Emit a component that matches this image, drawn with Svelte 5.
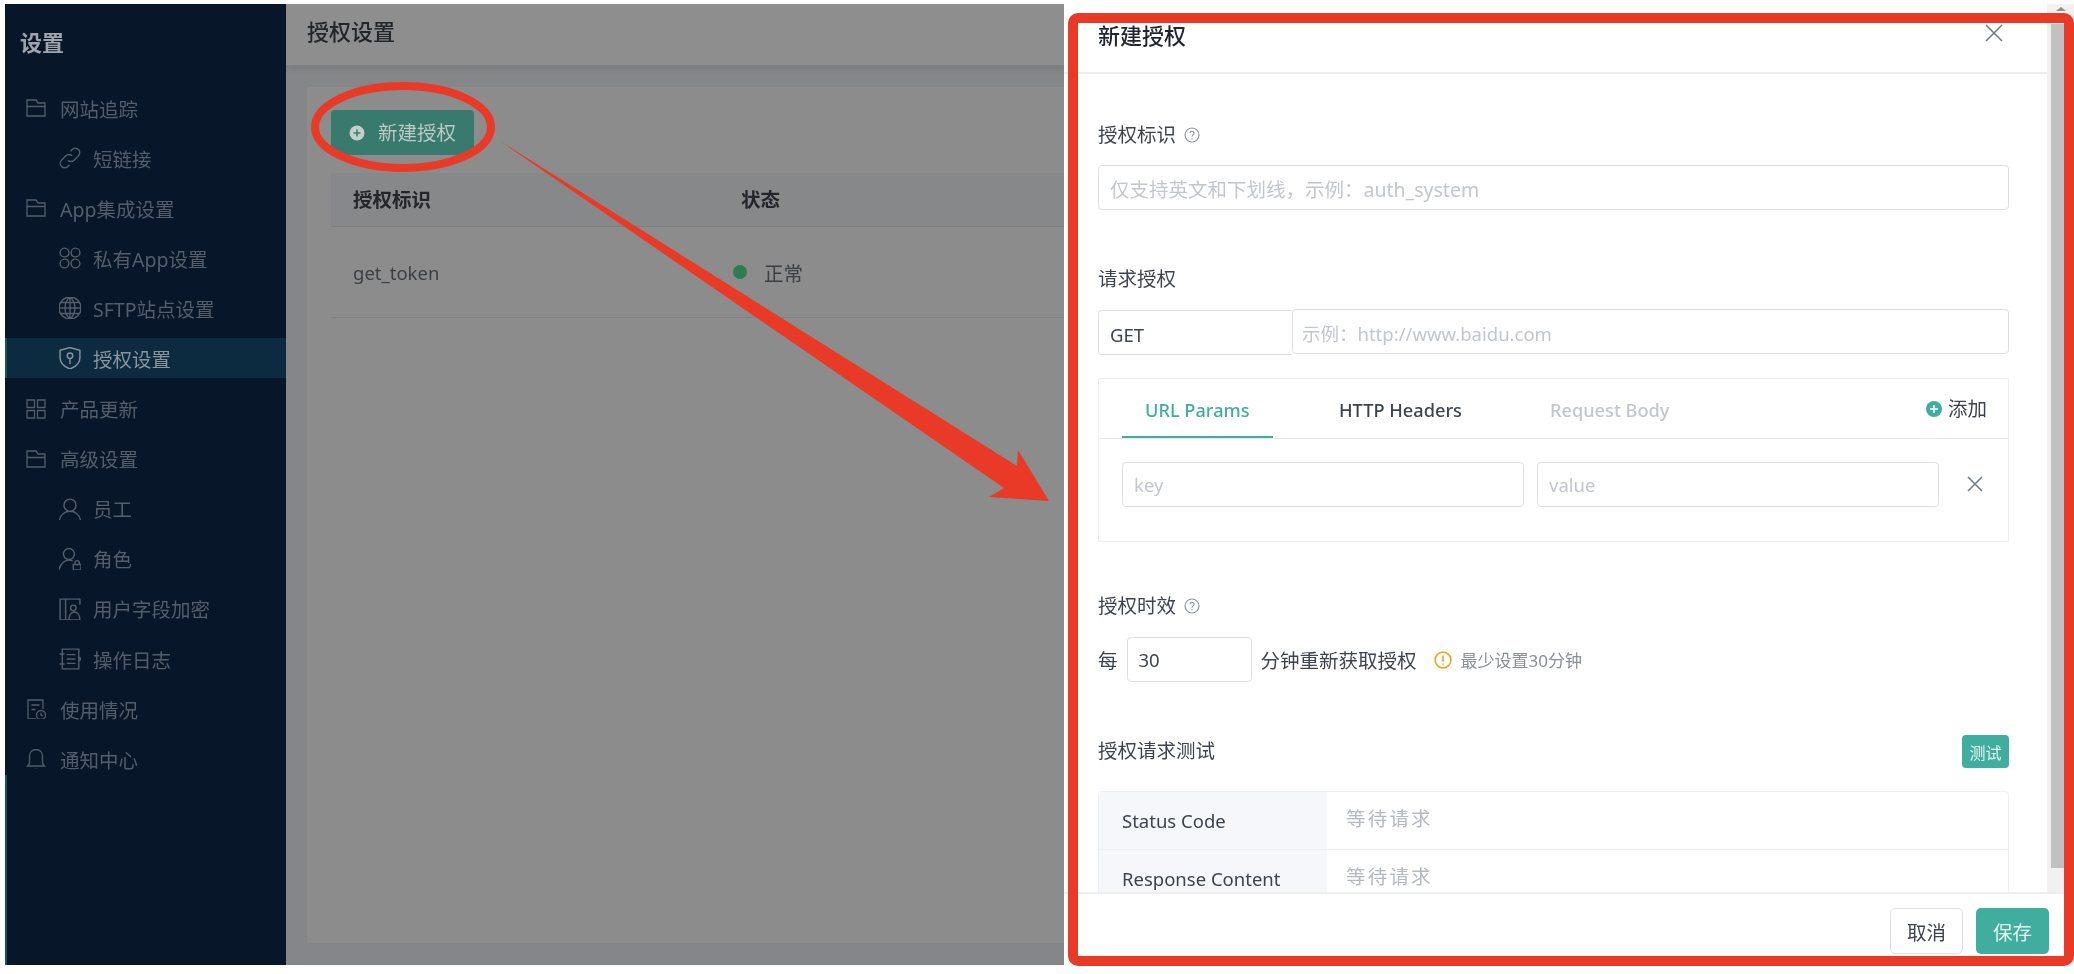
<script>
  const P = {
    folder: 'M3 4h9l2 3h7v13H3z M3 10.5h18',
    link: 'M10 14a4 4 0 0 0 5.7 0l4-4a4 4 0 0 0-5.7-5.7l-1.5 1.5 M14 10a4 4 0 0 0-5.7 0l-4 4a4 4 0 0 0 5.7 5.7l1.5-1.5',
    apps: 'M7 3a4 4 0 0 1 4 4c0 2.500-1.500 4-4 4a4 4 0 0 1 0-8z M17 3a4 4 0 0 1 0 8c-2.500 0-4-1.500-4-4a4 4 0 0 1 4-4z M7 13c2.500 0 4 1.500 4 4a4 4 0 1 1-4-4z M17 13a4 4 0 1 1-4 4c0-2.500 1.500-4 4-4z',
    globe: 'M12 2a10 10 0 1 0 0 20a10 10 0 1 0 0-20z M2 12h20 M3.5 7h17 M3.5 17h17 M12 2c-6 5-6 15 0 20 M12 2c6 5 6 15 0 20 M12 2v20',
    shield: 'M12 2.500l9 2.500v7c0 5-4 8-9 10c-5-2-9-5-9-10V5z M12 7.500a2.500 2.500 0 1 0 0 5a2.500 2.500 0 1 0 0-5z M12 12.500v5',
    grid: 'M3 3h7.5v7.5H3z M13.5 3H21v7.5h-7.5z M3 13.5h7.5V21H3z M13.5 13.5H21V21h-7.5z',
    user: 'M12 3a5.5 5.5 0 1 0 0 11a5.5 5.5 0 1 0 0-11z M2.5 22c1-5 5-8 9.5-8s8.5 3 9.5 8',
    userlock: 'M11 2.5a5 5 0 1 0 0 10a5 5 0 1 0 0-10z M2 22c.7-5 4.500-9 9-9c1.500 0 2.500.3 3.500 1 M15 17h7v5h-7z M16.500 17v-1.500a2 2 0 0 1 4 0V17',
    docuser: 'M21 8V3H3v19h8 M8 3v19 M15 8.500a2.500 2.500 0 1 0 0 5a2.500 2.500 0 1 0 0-5z M11 22c0-4 2-7 4-7h2c2 0 4 3 4 7z',
    notebook: 'M5 3h15v18H5z M2.500 7.500H7 M2.500 16.500H7 M9 8h8 M9 12h8 M9 16h8 M20 10.500a1.500 1.500 0 0 1 0 3',
    docclock: 'M19 12V3H4v19h8 M7.500 8h8 M7.500 12.500h4 M17 13.500a4.500 4.500 0 1 0 0 9a4.500 4.500 0 1 0 0-9z M17 15.800V18l1.800 1',
    bell: 'M12 2.500c-4 0-6.500 3-6.500 7v7L3.500 19h17l-2-2.500v-7c0-4-2.500-7-6.500-7z M10 22.500h4'
  };
  const menu = [
    { t: '网站追踪', i: 'folder' },
    { t: '短链接', i: 'link', sub: true },
    { t: 'App集成设置', i: 'folder' },
    { t: '私有App设置', i: 'apps', sub: true },
    { t: 'SFTP站点设置', i: 'globe', sub: true },
    { t: '授权设置', i: 'shield', sub: true, active: true },
    { t: '产品更新', i: 'grid' },
    { t: '高级设置', i: 'folder' },
    { t: '员工', i: 'user', sub: true },
    { t: '角色', i: 'userlock', sub: true },
    { t: '用户字段加密', i: 'docuser', sub: true },
    { t: '操作日志', i: 'notebook', sub: true },
    { t: '使用情况', i: 'docclock' },
    { t: '通知中心', i: 'bell' }
  ];
</script>

<div class="page">
  <aside class="side">
    <div class="side-title">设置</div>
    <nav class="menu">
      {#each menu as m}
        <div class="item" class:sub={m.sub} class:active={m.active}>
          <svg class="mi" viewBox="2 2 20 20"><path d={P[m.i]} /></svg>
          <span>{m.t}</span>
        </div>
      {/each}
    </nav>
    <div class="side-edge"></div>
  </aside>

  <main class="main">
    <header class="main-head">授权设置</header>
    <div class="content">
      <section class="card">
        <button class="new-btn">
          <svg viewBox="0 0 16 16" class="plus"><circle cx="8" cy="8" r="7.500" fill="#c4cfcc" /><path d="M8 4.500v7M4.500 8h7" stroke="#3a7d70" stroke-width="1.500" /></svg>
          <span class="new-text">新建授权</span>
        </button>
        <div class="thead">
          <div class="c1">授权标识</div>
          <div>状态</div>
        </div>
        <div class="trow">
          <div class="c1 tok">get_token</div>
          <div class="status"><i class="dot"></i>正常</div>
        </div>
      </section>
    </div>
  </main>

  <section class="modal">
    <div class="modal-top">
      <div class="modal-col">
        <div class="modal-head">
          <span>新建授权</span>
          <svg class="x" viewBox="0 0 20 20"><path d="M2 2l16 16M18 2L2 18" /></svg>
        </div>
        <div class="modal-body">
          <div class="label first">授权标识
            <svg class="q" viewBox="0 0 16 16"><circle cx="8" cy="8" r="7" /><path d="M6 6.300a2 2 0 1 1 3 1.700c-.7.400-1 .8-1 1.700M8 11.300v1" /></svg>
          </div>
          <input class="inp full low" placeholder="仅支持英文和下划线，示例：auth_system" />

          <div class="label second">请求授权</div>
          <div class="req">
            <input class="inp get low" value="GET" />
            <input class="inp url low" placeholder="示例：http://www.baidu.com" />
          </div>

          <div class="tabs">
            <div class="tabbar">
              <span class="tab on">URL Params</span>
              <span class="tab hh">HTTP Headers</span>
              <span class="tab off">Request Body</span>
              <span class="add">
                <svg viewBox="0 0 16 16"><circle cx="8" cy="8" r="8" fill="#3fae9e" /><path d="M8 4v8M4 8h8" stroke="#fff" stroke-width="1.500" /></svg>
                添加
              </span>
            </div>
            <div class="kv">
              <input class="inp k" placeholder="key" />
              <input class="inp k" placeholder="value" />
              <svg class="x2" viewBox="0 0 20 20"><path d="M3 3l14 14M17 3L3 17" /></svg>
            </div>
          </div>

          <div class="label third">授权时效
            <svg class="q" viewBox="0 0 16 16"><circle cx="8" cy="8" r="7" /><path d="M6 6.300a2 2 0 1 1 3 1.700c-.7.400-1 .8-1 1.700M8 11.300v1" /></svg>
          </div>
          <div class="every">
            <span>每</span>
            <input class="inp num" value="30" />
            <span class="after">分钟重新获取授权</span>
            <svg class="warn" viewBox="0 0 16 16"><circle cx="8" cy="8" r="7" /><path d="M8 4v5.500M8 11v1.200" /></svg>
            <span class="tip">最少设置30分钟</span>
          </div>

          <div class="test-row">
            <span class="test-label">授权请求测试</span>
            <button class="test-btn">测试</button>
          </div>

          <div class="result">
            <div class="r-row"><div class="r-k">Status Code</div><div class="r-v">等待请求</div></div>
            <div class="r-row"><div class="r-k">Response Content</div><div class="r-v">等待请求</div></div>
          </div>
        </div>
      </div>
      <div class="sb"><div class="thumb"></div></div>
    </div>
    <footer class="modal-foot">
      <button class="btn cancel">取消</button>
      <button class="btn save">保存</button>
    </footer>
  </section>

  <div class="redframe"></div>
  <svg class="annot" viewBox="0 0 2074 974">
    <path d="M2056 11l5-4 5 4z" fill="#8f8f8f" />
    <ellipse cx="403" cy="127" rx="88" ry="41" fill="none" stroke="#e83a27" stroke-width="8" />
    <polygon points="500,141 1017,466 1018,450 1049,501 989,497 1004,488" fill="#e83a27" />
  </svg>
</div>

<style>
  :global(body) { margin: 0; background: #fff; }
  .page {
    position: relative; width: 2074px; height: 974px; box-sizing: border-box;
    padding: 4px 0 9px 5px; display: flex; overflow: hidden; background: #fff;
    font-family: "Noto Sans", "Noto Sans CJK SC", sans-serif; font-size: 19.500px;
    filter: blur(0.6px);
  }
  .side { position: relative; width: 281px; flex: none; background: #071628; color: #545e6a; }
  .side-title { height: 85px; box-sizing: border-box; padding: 23px 0 0 15px; font-size: 22px; font-weight: 700; line-height: 30px; color: #a0a5ab; }
  .menu { display: flex; flex-direction: column; gap: 10.100px; }
  .item { height: 40px; margin-top: -1px; margin-bottom: 1px; display: flex; align-items: center; padding-left: 21px; gap: 14px; }
  .item.sub { padding-left: 54px; gap: 12px; }
  .item.active { background: #0c2a40; color: #8a949c; box-shadow: inset 2px 0 #155552; }
  .mi { width: 20px; height: 20px; flex: none; fill: none; stroke: currentColor; stroke-width: 1.300; }
  .item.sub .mi { width: 22px; height: 22px; }
  .side-edge { position: absolute; left: 0; bottom: 0; width: 2px; height: 190px; background: #155552; }

  .main { flex: 1; min-width: 0; display: flex; flex-direction: column; background: #858687; overflow: hidden; }
  .main-head { height: 61px; flex: none; box-sizing: border-box; padding: 10px 0 0 21px; line-height: 34px; font-size: 22px; font-weight: 500; color: #22262b; background: #8e8e8e; box-shadow: 0 2px 8px rgba(0,0,0,.12); }
  .content { flex: 1; padding: 22px 0 22px 21px; display: flex; }
  .card { flex: 1; background: #8c8c8c; padding: 23px 0 0 24px; }
  .new-btn { display: flex; align-items: center; gap: 13px; width: 143px; height: 45px; box-sizing: border-box; padding: 0 0 0 18px; border: 0; border-radius: 4px; background: #387a6d; color: #bcc9c5; font: inherit; }
  .new-text { margin-top: -3px; }
  .plus { width: 16px; height: 16px; }
  .thead, .trow { display: flex; color: #22262b; }
  .thead { margin-top: 18px; height: 54px; align-items: center; background: #87888a; border-bottom: 1px solid #7c7e81; font-weight: 700; padding-bottom: 2px; box-sizing: border-box; }
  .trow { height: 90px; align-items: center; color: #3b3f44; border-bottom: 1px solid #828282; }
  .c1 { width: 410px; flex: none; padding-left: 22px; box-sizing: border-box; }
  .tok { font-size: 18.500px; }
  .status { display: flex; align-items: center; gap: 17px; margin-left: -8px; }
  .dot { width: 14px; height: 14px; border-radius: 50%; background: #2f7d4f; }

  .modal { width: 1010px; flex: none; margin-bottom: -9px; display: flex; flex-direction: column; background: #fff; color: #3d4450; }
  .modal-top { flex: 1; min-height: 0; display: flex; }
  .modal-col { flex: 1; min-width: 0; display: flex; flex-direction: column; }
  .modal-head { height: 70px; flex: none; box-sizing: border-box; border-bottom: 2px solid #eceef0; padding: 18px 0 0 34px; display: flex; justify-content: space-between; font-size: 22px; font-weight: 500; color: #1e2530; line-height: 26px; }
  .x { width: 20px; height: 20px; margin: 1px 43px 0 0; fill: none; stroke: #6f7885; stroke-width: 1.500; }
  .modal-body { flex: 1; min-height: 0; overflow: hidden; padding: 0 38px 0 34px; }
  .label { display: flex; align-items: center; gap: 8px; height: 26px; line-height: 26px; color: #3d4450; }
  .first { margin-top: 48px; }
  .second { margin-top: 56px; }
  .third { margin-top: 51px; }
  .q { width: 16px; height: 16px; fill: none; stroke: #8f97a3; stroke-width: 1.200; }
  .inp { box-sizing: border-box; height: 45px; border: 1.500px solid #dde1e7; border-radius: 4px; padding: 0 11px; font: inherit; font-size: 18.500px; color: #3d4450; background: #fff; outline: 0; min-width: 0; }
  .inp::placeholder { color: #c2c6cd; opacity: 1; }
  .low { padding-top: 4px; }
  .full { display: block; width: 100%; margin-top: 17px; font-size: 19.500px; }
  .req { display: flex; margin-top: 18px; }
  .get { width: 194px; border-right: 0; border-radius: 4px 0 0 4px; flex: none; }
  .url { flex: 1; padding-left: 9px; margin-top: -1px; }
  .tabs { margin-top: 23px; height: 164px; box-sizing: border-box; border: 1.500px solid #eceef1; border-radius: 2px; }
  .tabbar { position: relative; height: 60px; box-sizing: border-box; border-bottom: 1.500px solid #e8eaed; display: flex; align-items: center; font-weight: 500; font-size: 18.200px; }
  .tab { position: absolute; top: 18px; line-height: 26px; }
  .on { left: 23px; padding: 0 23px; top: 18px; height: 41px; box-sizing: border-box; border-bottom: 2.500px solid #3fae9e; color: #3fae9e; }
  .hh { left: 240px; color: #3d4450; }
  .off { left: 451px; color: #c2c6cd; }
  .add { position: absolute; right: 21px; top: 17px; display: flex; align-items: center; gap: 6px; font-weight: 400; font-size: 19.500px; line-height: 26px; }
  .add svg { width: 16px; height: 16px; }
  .kv { display: flex; align-items: center; gap: 13px; padding: 23px 0 0 23px; }
  .k { width: 402px; flex: none; }
  .x2 { width: 20px; height: 20px; margin: -2px 0 0 13px; fill: none; stroke: #6f7885; stroke-width: 1.500; }
  .every { display: flex; align-items: center; margin-top: 18px; }
  .num { width: 125px; margin-left: 9px; }
  .after { margin-left: 9px; }
  .warn { width: 18px; height: 18px; margin-left: 17px; fill: none; stroke: #eea72b; stroke-width: 1.500; }
  .tip { margin-left: 9px; font-size: 17px; color: #8a8f98; }
  .test-row { display: flex; justify-content: space-between; align-items: center; margin-top: 53px; }
  .test-label { margin-top: -5px; }
  .test-btn { width: 47px; height: 33px; padding: 0; border: 0; border-radius: 4px; background: #3fae9e; color: #e6f5f2; font: inherit; font-size: 16px; }
  .result { margin-top: 23px; border: 1.500px solid #eceff3; border-radius: 4px; }
  .r-row { display: flex; height: 58px; border-bottom: 1.500px solid #eceff3; box-sizing: border-box; }
  .r-k { width: 228px; flex: none; box-sizing: border-box; padding: 14px 0 0 23px; line-height: 30px; background: #f5f7fa; color: #3d4450; font-size: 18.500px; }
  .r-v { padding: 12px 0 0 19px; line-height: 30px; letter-spacing: 2.200px; color: #b4b8bf; }

  .sb { width: 27px; flex: none; background: #f1f1f1; padding: 20px 0 0 4px; box-sizing: border-box; }
  .thumb { width: 100%; height: 844px; background: #c1c1c1; }
  .modal-foot { height: 82px; flex: none; box-sizing: border-box; border-top: 2px solid #eceef0; display: flex; justify-content: flex-end; gap: 13px; padding: 14px 25px 0 0; }
  .btn { width: 73px; height: 46px; padding: 0; border-radius: 5px; font: inherit; }
  .cancel { background: #fff; border: 1.500px solid #dde1e7; color: #3d4450; }
  .save { background: #3fae9e; border: 0; color: #e6f5f2; }

  .redframe { position: absolute; left: 1068px; top: 13px; width: 1006px; height: 953px; box-sizing: border-box; border: 10px solid #e83a27; border-radius: 10px; pointer-events: none; }
  .annot { position: absolute; left: 0; top: 0; width: 2074px; height: 974px; pointer-events: none; }
</style>
